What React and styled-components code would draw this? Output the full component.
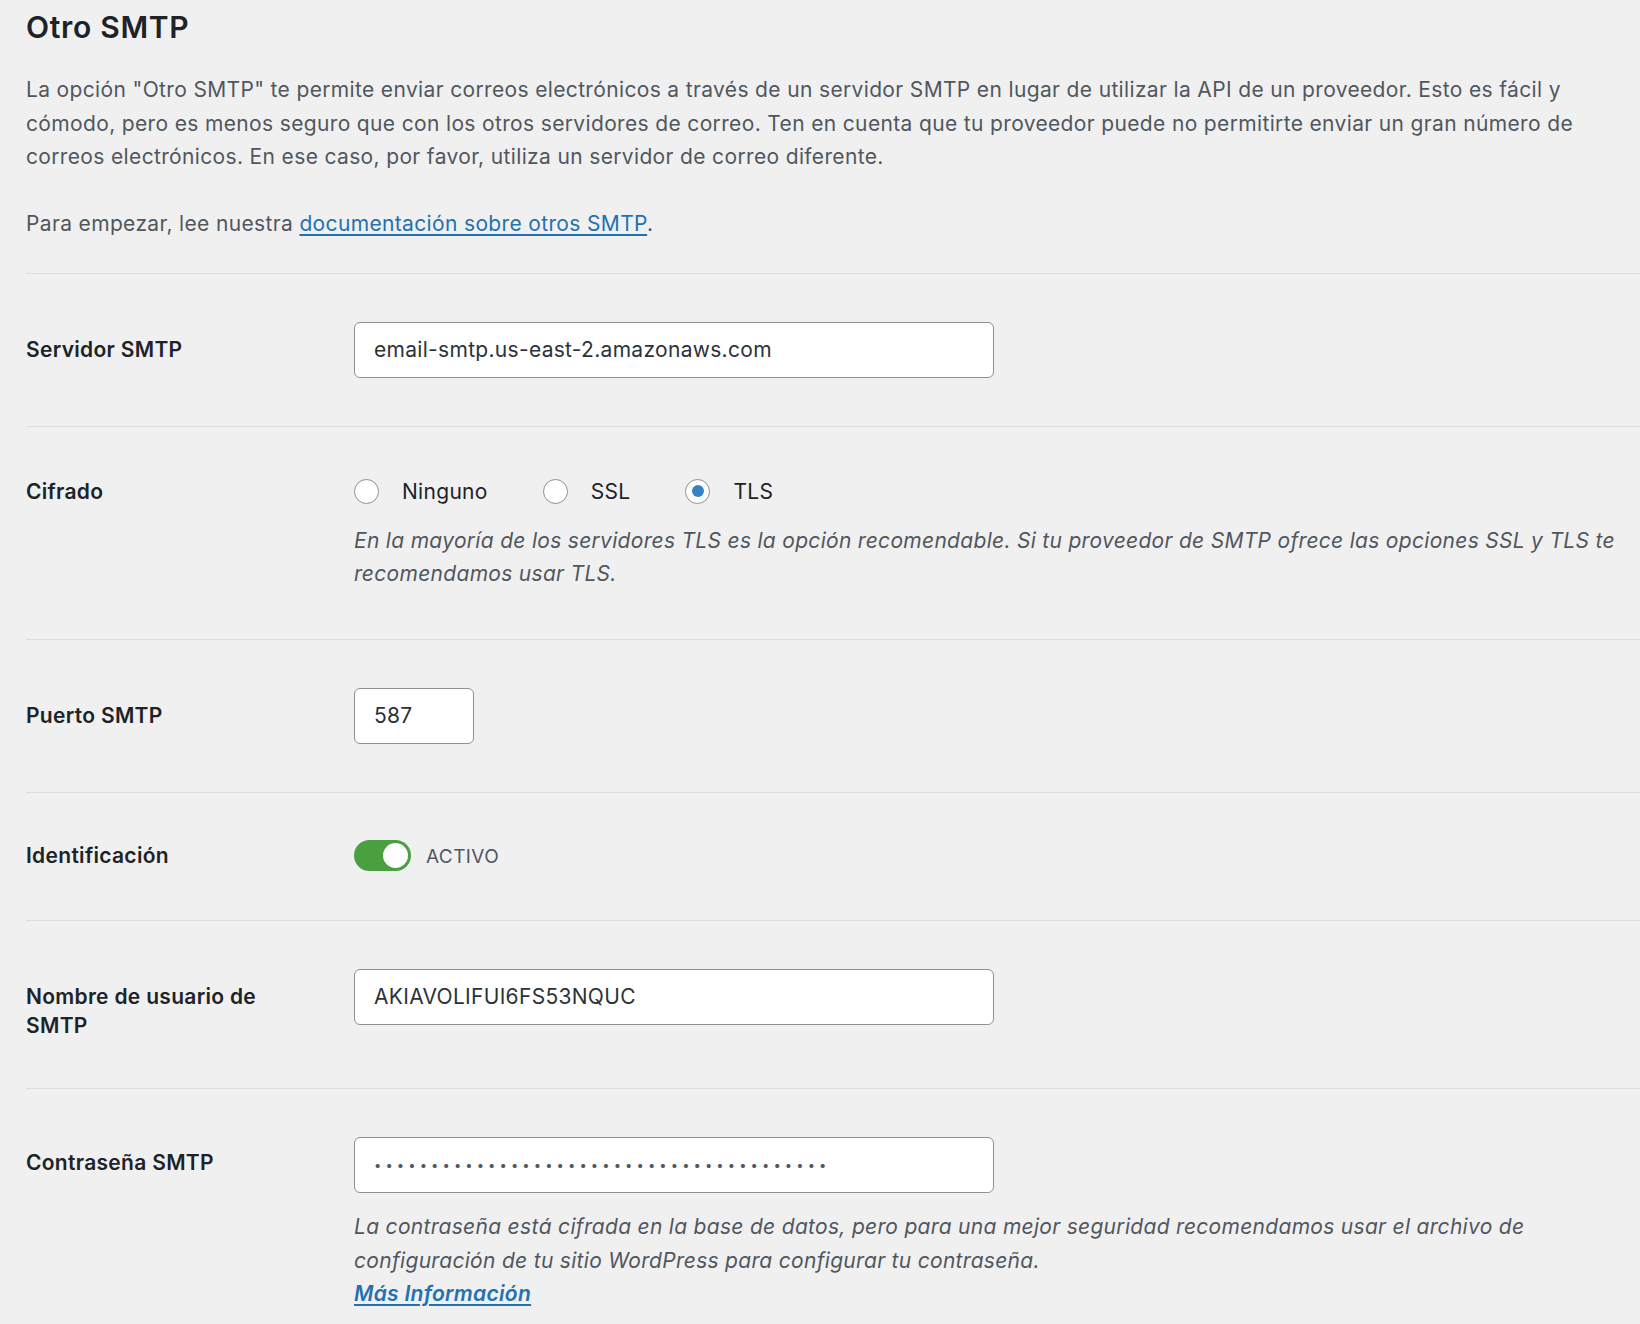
import React from 'react';
import styled, { createGlobalStyle } from 'styled-components';

const GlobalStyle = createGlobalStyle`
    html, body {
        margin: 0;
        background: #f0f0f1;
    }

    body {
        font-family: Inter, "Noto Sans", sans-serif;
        color: #50575e;
        overflow-x: hidden;
    }
`;

const Page = styled.div`
    padding: 0 0 40px 26px;
`;

const Title = styled.h1`
    margin: 0;
    padding-top: 7px;
    font-size: 30px;
    line-height: 40px;
    font-weight: 600;
    letter-spacing: 0.7px;
    color: #1d2327;
`;

const Intro = styled.p`
    margin: 26px 0 0;
    font-size: 21px;
    line-height: 33.5px;
    letter-spacing: 0.35px;
    color: #50575e;

    & + & {
        margin-top: 33.5px;
    }

    a {
        color: #2271b1;
        text-decoration: underline;
        text-underline-offset: 3px;
    }
`;

const Form = styled.div`
    margin-top: 32px;
`;

// one setting: label column on the left, field on the right
const Row = styled.div`
    display: flex;
    align-items: baseline;
    padding: 48px 0;
    border-top: 1px solid #dcdcde;
`;

const Label = styled.label`
    flex: 0 0 328px;
    box-sizing: border-box;
    padding-right: 40px;
    font-size: 21px;
    line-height: 29px;
    font-weight: 600;
    letter-spacing: 0.3px;
    color: #1d2327;
`;

const Field = styled.div`
    flex: 1;
    min-width: 0;
`;

const TextInput = styled.input`
    display: block;
    box-sizing: border-box;
    width: ${p => p.$width || '640px'};
    height: 56px;
    margin: 0;
    padding: 0 19px;
    border: 1px solid #8c8f94;
    border-radius: 6px;
    background: #fff;
    font-family: Inter, "Noto Sans", sans-serif;
    font-size: ${p => (p.$masked ? '13px' : '21px')};
    letter-spacing: ${p => (p.$masked ? '4.1px' : '0.3px')};
    color: ${p => (p.$masked ? '#50575e' : '#2c3338')};
    outline: none;
`;

const Options = styled.div`
    font-size: 21px;
    line-height: 34px;
    letter-spacing: 0.3px;
    color: #1d2327;
`;

const Option = styled.label`
    margin-right: 55px;
    white-space: nowrap;
`;

const Radio = styled.input.attrs({ type: 'radio' })`
    appearance: none;
    display: inline-block;
    vertical-align: middle;
    position: relative;
    box-sizing: border-box;
    width: 25px;
    height: 25px;
    margin: -3px 23px 0 0;
    border: 1px solid #8c8f94;
    border-radius: 50%;
    background: #fff;

    &:checked::before {
        content: '';
        position: absolute;
        top: 5.5px;
        left: 5.5px;
        width: 12px;
        height: 12px;
        border-radius: 50%;
        background: #3582c4;
    }
`;

const Desc = styled.p`
    margin: ${p => p.$gap || '15px'} 0 0;
    font-size: 21px;
    line-height: 33.5px;
    letter-spacing: 0.3px;
    font-style: italic;
    color: #50575e;

    a {
        display: inline-block;
        color: #2271b1;
        font-weight: 600;
        text-decoration: underline;
        text-underline-offset: 3px;
    }
`;

const ToggleLine = styled.label`
    font-size: 19px;
    line-height: 31px;
    letter-spacing: 0.4px;
    color: #50575e;
    text-transform: uppercase;
`;

const Switch = styled.span`
    display: inline-block;
    vertical-align: middle;
    position: relative;
    width: 57px;
    height: 31px;
    margin: -3px 15px 0 0;
    border-radius: 16px;
    background: ${p => (p.$on ? '#4aa03f' : '#c3c4c7')};

    &::after {
        content: '';
        position: absolute;
        top: 3px;
        ${p => (p.$on ? 'right: 3px;' : 'left: 3px;')}
        width: 25px;
        height: 25px;
        border-radius: 50%;
        background: #fff;
    }
`;

const encryption = ['Ninguno', 'SSL', 'TLS'];

function App() {
    return (
        <>
            <GlobalStyle />
            <Page>
                <Title>Otro SMTP</Title>
                <Intro>
                    La opción "Otro SMTP" te permite enviar correos electrónicos a través de un servidor SMTP en lugar de utilizar la API de un proveedor. Esto es fácil y cómodo, pero es menos seguro que con los otros servidores de correo. Ten en cuenta que tu proveedor puede no permitirte enviar un gran número de correos electrónicos. En ese caso, por favor, utiliza un servidor de correo diferente.
                </Intro>
                <Intro>
                    Para empezar, lee nuestra <a href="#doc">documentación sobre otros SMTP</a>.
                </Intro>

                <Form>
                    <Row>
                        <Label htmlFor="smtp-host">Servidor SMTP</Label>
                        <Field>
                            <TextInput id="smtp-host" type="text" defaultValue="email-smtp.us-east-2.amazonaws.com" />
                        </Field>
                    </Row>

                    <Row>
                        <Label>Cifrado</Label>
                        <Field>
                            <Options>
                                {encryption.map(name => (
                                    <Option key={name}>
                                        <Radio name="encryption" defaultChecked={name === 'TLS'} />
                                        {name}
                                    </Option>
                                ))}
                            </Options>
                            <Desc>
                                En la mayoría de los servidores TLS es la opción recomendable. Si tu proveedor de SMTP ofrece las opciones SSL y TLS te recomendamos usar TLS.
                            </Desc>
                        </Field>
                    </Row>

                    <Row>
                        <Label htmlFor="smtp-port">Puerto SMTP</Label>
                        <Field>
                            <TextInput id="smtp-port" type="text" $width="120px" defaultValue="587" />
                        </Field>
                    </Row>

                    <Row>
                        <Label>Identificación</Label>
                        <Field>
                            <ToggleLine>
                                <Switch $on />
                                Activo
                            </ToggleLine>
                        </Field>
                    </Row>

                    <Row>
                        <Label htmlFor="smtp-user">Nombre de usuario de SMTP</Label>
                        <Field>
                            <TextInput id="smtp-user" type="text" defaultValue="AKIAVOLIFUI6FS53NQUC" />
                        </Field>
                    </Row>

                    <Row>
                        <Label htmlFor="smtp-pass">Contraseña SMTP</Label>
                        <Field>
                            <TextInput id="smtp-pass" type="password" $masked defaultValue="xxxxxxxxxxxxxxxxxxxxxxxxxxxxxxxxxxxxxxxx" />
                            <Desc $gap="17px">
                                La contraseña está cifrada en la base de datos, pero para una mejor seguridad recomendamos usar el archivo de configuración de tu sitio WordPress para configurar tu contraseña.
                                <br />
                                <a href="#more">Más Información</a>
                            </Desc>
                        </Field>
                    </Row>
                </Form>
            </Page>
        </>
    );
}

export default App;
